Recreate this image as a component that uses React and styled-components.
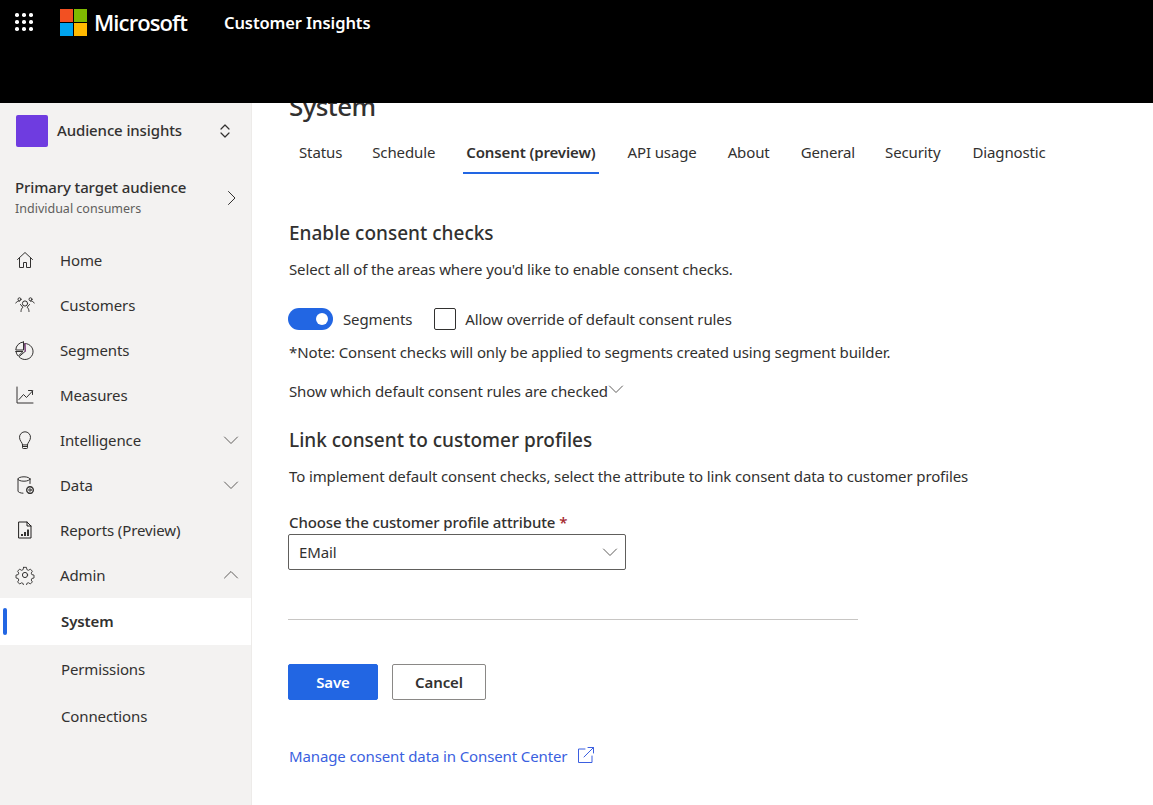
import React from 'react';
import styled, { createGlobalStyle } from 'styled-components';

const GlobalStyle = createGlobalStyle`
  html, body {
    margin: 0;
    height: 100%;
    background: #fff;
    overflow: hidden;
  }
  body {
    font-family: "Noto Sans", "Open Sans", sans-serif;
    font-size: 15px;
    letter-spacing: -0.12px;
    color: #323130;
  }
  * { box-sizing: border-box; }
`;

const Page = styled('div')`
  display: flex;
  flex-direction: column;
  height: 805px;
`;

const Header = styled('header')`
  position: relative;
  z-index: 2;
  flex: 0 0 103px;
  background: #000;
  display: flex;
  align-items: flex-start;
  color: #fff;
`;

const Waffle = styled('div')`
  display: grid;
  grid-template-columns: repeat(3, 3.5px);
  grid-auto-rows: 3.5px;
  gap: 3.5px;
  margin: 13px 0 0 15px;
  span {
    background: #fff;
    border-radius: 50%;
  }
`;

const Logo = styled('div')`
  display: grid;
  grid-template-columns: repeat(2, 13px);
  grid-auto-rows: 13px;
  gap: 1px;
  margin: 9px 0 0 27.5px;
`;

const LogoTile = styled('span')`
  background: ${(p) => p.$color};
`;

const Brand = styled('div')`
  margin: 7px 0 0 7px;
  font-family: "Open Sans", sans-serif;
  font-size: 22px;
  line-height: 30px;
  font-weight: 600;
  letter-spacing: -0.9px;
  width: 130px;
`;

const Product = styled('div')`
  margin: 11px 0 0 0;
  font-size: 16.5px;
  line-height: 24px;
  font-weight: 600;
  letter-spacing: -0.1px;
`;

const Body = styled('div')`
  flex: 1;
  display: flex;
  min-height: 0;
`;

const Sidebar = styled('nav')`
  flex: 0 0 252px;
  background: #f3f2f1;
  border-right: 1px solid #edebe9;
  display: flex;
  flex-direction: column;
`;

const AreaRow = styled('div')`
  display: flex;
  align-items: center;
  margin: 12px 18px 0 16px;
  height: 32px;
`;

const AreaBadge = styled('div')`
  width: 32px;
  height: 32px;
  background: #6f3ce0;
  border-radius: 2px;
  margin-right: 9px;
`;

const AreaName = styled('div')`
  flex: 1;
  font-weight: 500;
  padding-bottom: 2px;
`;

const AudienceRow = styled('div')`
  display: flex;
  align-items: center;
  justify-content: space-between;
  margin: 30px 11px 0 15px;
`;

const AudienceTitle = styled('div')`
  line-height: 20px;
  font-weight: 500;
`;

const AudienceSub = styled('div')`
  margin-top: 2px;
  font-size: 12.5px;
  line-height: 20px;
  letter-spacing: 0;
  color: #605e5c;
`;

const NavList = styled('div')`
  margin-top: 19px;
  display: flex;
  flex-direction: column;
`;

const NavRow = styled('div')`
  height: 45px;
  display: flex;
  align-items: center;
  padding: 0 12px 2px 15px;
`;

const NavIcon = styled('span')`
  width: 20px;
  height: 20px;
  margin-right: 25px;
  display: flex;
`;

const NavLabel = styled('span')`
  flex: 1;
`;

const SubRow = styled('div')`
  position: relative;
  height: 47px;
  display: flex;
  align-items: center;
  padding-left: 61px;
  padding-bottom: ${(p) => (p.$active ? 2 : 0)}px;
  font-weight: ${(p) => (p.$active ? 600 : 400)};
  background: ${(p) => (p.$active ? '#fff' : 'transparent')};
`;

const ActiveBar = styled('span')`
  position: absolute;
  left: 3px;
  top: 10px;
  width: 4px;
  height: 27px;
  border-radius: 2px;
  background: #2266e3;
`;

const Main = styled('main')`
  flex: 1;
  overflow: hidden;
  padding-left: 36px;
`;

const PageTitle = styled('h1')`
  margin: -15px 0 0 1px;
  font-size: 26px;
  line-height: 36px;
  font-weight: 500;
  letter-spacing: -0.6px;
`;

const Tabs = styled('div')`
  display: flex;
  margin: 15px 0 0 0;
  height: 35px;
`;

const Tab = styled('div')`
  padding: 3px 3px 0;
  margin: 0 ${(p) => p.$gap}px 0 ${(p) => p.$left || 0}px;
  line-height: 20px;
  font-weight: ${(p) => (p.$active ? 600 : 400)};
  border-bottom: 2px solid ${(p) => (p.$active ? '#2266e3' : 'transparent')};
`;

const SectionTitle = styled('h2')`
  margin: ${(p) => p.$top || 0}px 0 0 1px;
  font-size: 19px;
  line-height: 24px;
  font-weight: 500;
  letter-spacing: 0;
`;

const Para = styled('p')`
  margin: ${(p) => p.$top}px 0 0 1px;
  line-height: 20px;
`;

const Content = styled('div')`
  padding-top: 47px;
`;

const Controls = styled('div')`
  display: flex;
  align-items: center;
  margin-top: 28px;
  height: 24px;
`;

const ToggleTrack = styled('span')`
  position: relative;
  width: 45px;
  height: 22px;
  border-radius: 11px;
  background: #2266e3;
  margin-right: 10px;
`;

const ToggleKnob = styled('span')`
  position: absolute;
  right: 5px;
  top: 5px;
  width: 12px;
  height: 12px;
  border-radius: 50%;
  background: #fff;
`;

const CheckBox = styled('span')`
  width: 22px;
  height: 22px;
  border: 1px solid #323130;
  border-radius: 2px;
  margin: 0 9px 0 22px;
`;

const Disclosure = styled('div')`
  display: flex;
  align-items: flex-start;
  margin: 19px 0 0 1px;
  line-height: 20px;
`;

const FieldLabel = styled('div')`
  margin: 26px 0 0 1px;
  line-height: 20px;
  font-weight: 500;
  span {
    color: #a4262c;
    margin-left: 4px;
  }
`;

const Select = styled('div')`
  width: 338px;
  height: 36px;
  margin-top: 2px;
  border: 1px solid #605e5c;
  border-radius: 2px;
  display: flex;
  align-items: center;
  justify-content: space-between;
  padding: 0 7px 0 10px;
`;

const Divider = styled('hr')`
  width: 570px;
  margin: 49px 0 0 0;
  border: 0;
  border-top: 1px solid #c8c6c4;
`;

const Actions = styled('div')`
  display: flex;
  gap: 14px;
  margin-top: 44px;
`;

const Button = styled('button')`
  height: 36px;
  width: ${(p) => p.$width}px;
  border-radius: 2px;
  border: 1px solid ${(p) => (p.$primary ? '#2266e3' : '#8a8886')};
  background: ${(p) => (p.$primary ? '#2266e3' : '#fff')};
  color: ${(p) => (p.$primary ? '#fff' : '#323130')};
  font-family: inherit;
  font-size: 15px;
  font-weight: 600;
  letter-spacing: -0.1px;
  padding: 0;
`;

const ManageLink = styled('a')`
  display: flex;
  align-items: center;
  margin: 44px 0 0 1px;
  height: 24px;
  color: #3b5fe0;
  svg {
    margin-left: 10px;
    margin-top: -3px;
  }
`;

const Line = ({ children, size = 20, stroke = '#484644', view = 20 }) => (
  <svg width={size} height={size} viewBox={`0 0 ${view} ${view}`} fill="none" stroke={stroke} strokeWidth="1" strokeLinecap="round" strokeLinejoin="round">
    {children}
  </svg>
);

const Chevron = ({ up, size = 16, stroke = '#605e5c' }) => (
  <Line size={size} view={16} stroke={stroke}>
    <path d={up ? 'M1.5 11 8 4.5 14.5 11' : 'M1.5 5 8 11.5 14.5 5'} />
  </Line>
);

const icons = {
  home: (
    <Line stroke="#323130">
      <path d="M2.500 9.500 10 2.500l7.500 7M4.500 8v9.500h4v-5h3v5h4V8" />
    </Line>
  ),
  customers: (
    <Line stroke="#323130">
      <circle cx="10" cy="8.500" r="2.600" />
      <path d="M6 16.500c0-1.500.5-3 1.800-4.300l-2.300-2.700M14 16.500c0-1.500-.5-3-1.800-4.300l2.300-2.700" />
      <circle cx="4.500" cy="4.300" r="1.500" />
      <circle cx="15.500" cy="4.300" r="1.500" />
      <path d="M.8 8c.6-1.300 2-2 3.700-2M19.200 8c-.6-1.300-2-2-3.700-2" />
    </Line>
  ),
  segments: (
    <Line stroke="#323130">
      <path d="M10 3.500a8 8 0 1 1-6 13.200L10 11.500z" />
      <path d="M8.500 2v8H.8A8 8 0 0 1 8.500 2z" />
      <path d="M1 11.500h7l-4.800 4.600A8 8 0 0 1 1 11.500z" />
      <path d="M10.200 3.500v8" stroke="#8a3b8f" />
    </Line>
  ),
  measures: (
    <Line stroke="#323130">
      <path d="M2 2v16h16" />
      <path d="M4 14.500l4.500-5 3 3 6-6.500M13.500 5.500h4v4" />
    </Line>
  ),
  intelligence: (
    <Line stroke="#323130">
      <path d="M7.500 14.500c0-2-3-3.500-3-7.200a5.500 5.500 0 0 1 11 0c0 3.700-3 5.200-3 7.200z" />
      <path d="M7.500 14.500v3.200a.8.8 0 0 0 .8.8h3.400a.8.8 0 0 0 .8-.8v-3.200M7.500 16.500h5" />
    </Line>
  ),
  data: (
    <Line stroke="#323130">
      <ellipse cx="9" cy="4" rx="6" ry="2.200" />
      <path d="M3 4v12c0 1.200 2.500 2.200 5 2.200M15 4v4.500" />
      <circle cx="15" cy="15" r="1.200" />
      <circle cx="15" cy="15" r="3.300" strokeDasharray="1.700 .9" strokeWidth="1.400" />
    </Line>
  ),
  reports: (
    <Line stroke="#201f1e">
      <path d="M4 2h8l4 4v12H4z" />
      <path d="M12 2v4h4" />
      <path d="M7 16v-2M10 16v-4M13 16V9.500" strokeWidth="1.800" strokeLinecap="butt" />
    </Line>
  ),
  admin: (
    <Line stroke="#323130">
      <circle cx="10" cy="10" r="2.600" />
      <path d="M8.400 1.500h3.200l.5 2.500 1.700.8 2.200-1.300 2.200 2.300-1.300 2.100.7 1.700 2.400.5v3.200l-2.400.6-.7 1.700 1.300 2.100-2.200 2.200-2.200-1.300-1.700.7-.5 2.400H8.400" transform="translate(1 1) scale(.9)" />
      <path d="M8.400 1.500l-.5 2.500-1.700.8L4 3.500 1.800 5.800l1.300 2.100-.7 1.700-2.400.5v3.200l2.400.6.700 1.700-1.300 2.100L4 20l2.200-1.300 1.700.7.500 2.400" transform="translate(1 1) scale(.9)" />
    </Line>
  ),
};

const navItems = [
  { key: 'home', label: 'Home' },
  { key: 'customers', label: 'Customers' },
  { key: 'segments', label: 'Segments' },
  { key: 'measures', label: 'Measures' },
  { key: 'intelligence', label: 'Intelligence', caret: 'down' },
  { key: 'data', label: 'Data', caret: 'down' },
  { key: 'reports', label: 'Reports (Preview)' },
  { key: 'admin', label: 'Admin', caret: 'up' },
];

const tabs = [
  { label: 'Status', gap: 24 },
  { label: 'Schedule', gap: 25 },
  { label: 'Consent (preview)', gap: 26, active: true },
  { label: 'API usage', gap: 25 },
  { label: 'About', gap: 25 },
  { label: 'General', gap: 24 },
  { label: 'Security', gap: 26 },
  { label: 'Diagnostic', gap: 0 },
];

const App = () => (
  <Page>
    <GlobalStyle />
    <Header>
      <Waffle>
        {Array.from({ length: 9 }).map((_, i) => <span key={i} />)}
      </Waffle>
      <Logo>
        {['#f25022', '#7fba00', '#00a4ef', '#ffb900'].map((c) => <LogoTile key={c} $color={c} />)}
      </Logo>
      <Brand>Microsoft</Brand>
      <Product>Customer Insights</Product>
    </Header>
    <Body>
      <Sidebar>
        <AreaRow>
          <AreaBadge />
          <AreaName>Audience insights</AreaName>
          <Line size={16} view={16} stroke="#323130">
            <path d="M4 6 8 2l4 4M4 10l4 4 4-4" strokeWidth="1.200" />
          </Line>
        </AreaRow>
        <AudienceRow>
          <div>
            <AudienceTitle>Primary target audience</AudienceTitle>
            <AudienceSub>Individual consumers</AudienceSub>
          </div>
          <Line size={16} view={16} stroke="#323130">
            <path d="M4.500 1.500 11 8l-6.500 6.500" />
          </Line>
        </AudienceRow>
        <NavList>
          {navItems.map((item) => (
            <NavRow key={item.key}>
              <NavIcon>{icons[item.key]}</NavIcon>
              <NavLabel>{item.label}</NavLabel>
              {item.caret && <Chevron up={item.caret === 'up'} />}
            </NavRow>
          ))}
          <SubRow $active>
            <ActiveBar />
            System
          </SubRow>
          <SubRow>Permissions</SubRow>
          <SubRow>Connections</SubRow>
        </NavList>
      </Sidebar>
      <Main>
        <PageTitle>System</PageTitle>
        <Tabs>
          {tabs.map((t, i) => (
            <Tab key={t.label} $gap={t.gap} $left={i === 0 ? 8 : 0} $active={t.active}>{t.label}</Tab>
          ))}
        </Tabs>
        <Content>
          <SectionTitle>Enable consent checks</SectionTitle>
          <Para $top={14}>Select all of the areas where you'd like to enable consent checks.</Para>
          <Controls>
            <ToggleTrack><ToggleKnob /></ToggleTrack>
            <span>Segments</span>
            <CheckBox />
            <span>Allow override of default consent rules</span>
          </Controls>
          <Para $top={11}>*Note: Consent checks will only be applied to segments created using segment builder.</Para>
          <Disclosure>
            Show which default consent rules are checked
            <Chevron />
          </Disclosure>
          <SectionTitle $top={27}>Link consent to customer profiles</SectionTitle>
          <Para $top={14}>To implement default consent checks, select the attribute to link consent data to customer profiles</Para>
          <FieldLabel>Choose the customer profile attribute<span>*</span></FieldLabel>
          <Select>
            EMail
            <Chevron />
          </Select>
          <Divider />
          <Actions>
            <Button $primary $width={90}>Save</Button>
            <Button $width={94}>Cancel</Button>
          </Actions>
          <ManageLink>
            Manage consent data in Consent Center
            <Line size={18} view={18} stroke="#3b5fe0">
              <path d="M8 3H1.500v13.500H15V10M7 11 16.500 1.500M11 1.500h5.500V7" />
            </Line>
          </ManageLink>
        </Content>
      </Main>
    </Body>
  </Page>
);

export default App;
